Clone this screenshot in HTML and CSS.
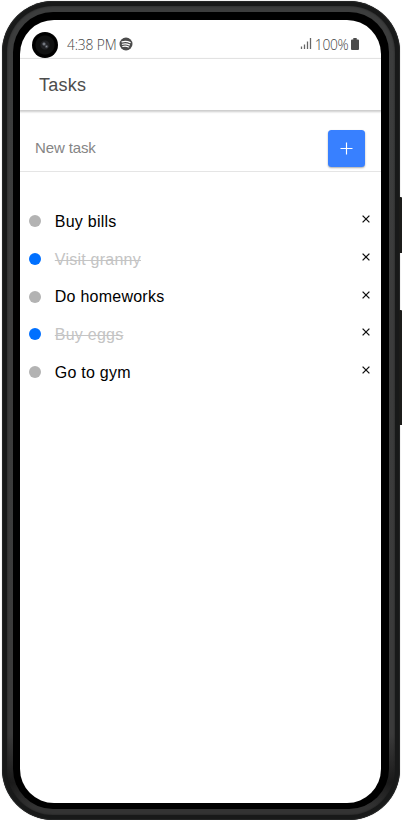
FILE: index.html
```html
<!DOCTYPE html>
<html lang="en">
<head>
<meta charset="utf-8">
<title>Tasks</title>
<link rel="stylesheet" href="styles.css">
</head>
<body>
<div class="phone">
  <i class="key key-power"></i>
  <i class="key key-volume"></i>
  <div class="rail">
    <div class="bezel">
      <main class="screen">
        <div class="status">
          <span class="camera"></span>
          <span class="clock">4:38 PM</span>
          <svg class="music" viewBox="0 0 14 14"><circle cx="7" cy="7" r="6.500" fill="#4b4b4b"/><path d="M3 4.900Q7.200 3.600 11.200 5.600M3.400 7.300Q7 6.200 10.400 7.900M3.800 9.500Q6.800 8.700 9.600 10" fill="none" stroke="#fff" stroke-width="1.200" stroke-linecap="round"/></svg>
          <svg class="signal" viewBox="0 0 12 13"><path d="M1.500 9.500V12M4.500 7.500V12M7.500 4.500V12M10.500 1V12" stroke="#666" stroke-width="1.300"/></svg>
          <span class="percent">100%</span>
          <svg class="battery" viewBox="0 0 8 12"><path d="M2.300 0h3.400v1.500H7q1 0 1 1V11q0 1-1 1H1q-1 0-1-1V2.500q0-1 1-1h1.300z" fill="#4b4b4b"/></svg>
        </div>
        <header class="bar"><h1>Tasks</h1></header>
        <form class="entry">
          <span class="placeholder">New task</span>
          <button class="add" type="button" aria-label="Add"><svg viewBox="0 0 13 13"><path d="M6.500 .5v12M.5 6.500h12" stroke="#fff" stroke-width="1.150"/></svg></button>
        </form>
        <ul class="tasks">
          <li><i class="dot"></i><span>Buy bills</span><svg class="remove" viewBox="0 0 8 8"><path d="M.6.6l6.800 6.800M7.400.6L.6 7.400"/></svg></li>
          <li class="done"><i class="dot"></i><span>Visit granny</span><svg class="remove" viewBox="0 0 8 8"><path d="M.6.6l6.800 6.800M7.400.6L.6 7.400"/></svg></li>
          <li><i class="dot"></i><span>Do homeworks</span><svg class="remove" viewBox="0 0 8 8"><path d="M.6.6l6.800 6.800M7.400.6L.6 7.400"/></svg></li>
          <li class="done"><i class="dot"></i><span>Buy eggs</span><svg class="remove" viewBox="0 0 8 8"><path d="M.6.6l6.800 6.800M7.400.6L.6 7.400"/></svg></li>
          <li><i class="dot"></i><span>Go to gym</span><svg class="remove" viewBox="0 0 8 8"><path d="M.6.6l6.800 6.800M7.400.6L.6 7.400"/></svg></li>
        </ul>
      </main>
    </div>
  </div>
</div>
</body>
</html>
```
FILE: styles.css
```css
* { box-sizing: border-box; }
body {
  margin: 0;
  background: #fff;
  overflow: hidden;
  font-family: "Liberation Sans", Arial, sans-serif;
}
.phone {
  position: relative;
  width: 398px;
  height: 819px;
  margin: 1px 0 0 2px;
  padding: 5px;
  border-radius: 51px;
  background: #181919;
  box-shadow: inset 0 0 0 1px #242525, 0 0 1px #777;
}
.key {
  position: absolute;
  left: 397px;
  width: 3px;
  background: #1c1c1a;
  border-radius: 1px 1px 0 0;
}
.key-power { top: 196px; height: 56px; }
.key-volume { top: 309px; height: 115px; }
.rail {
  height: 100%;
  padding: 6px;
  border-radius: 46px;
  background: linear-gradient(#3c3d3d, #3b3b3b 90%, #1a1a1a 96%, #333 99%);
  box-shadow: inset 0 0 2px #1c1c1c;
}
.bezel {
  height: 100%;
  padding: 8px 8px 6px 7px;
  border-radius: 40px;
  background: #000;
}
.screen {
  height: 100%;
  width: 361.400px;
  border-radius: 34px;
  background: #fff;
  overflow: hidden;
}
.status {
  display: flex;
  align-items: center;
  height: 39px;
  padding: 10px 22px 0 12px;
  border-bottom: 1px solid #ececec;
  color: #444;
  font: 300 13.800px "Open Sans", sans-serif;
}
.camera {
  width: 26px;
  height: 26px;
  margin-top: 1px;
  border-radius: 50%;
  background: radial-gradient(circle at 12px 12px, #9ca1aa 0, #555960 1.200px, transparent 2.200px), radial-gradient(circle at 14.500px 14.500px, #858992 0, #42454a 1.200px, transparent 2.200px), radial-gradient(circle, #202124 0 4px, #101111 5px 9px, #000 10px);
}
.clock { margin-left: 9px; letter-spacing: -.15px; }
.music { width: 14px; height: 14px; margin-left: 3px; }
.signal { width: 12px; height: 13px; margin: 0 3px 1px auto; }
.percent { letter-spacing: -.3px; }
.battery { width: 8px; height: 12px; margin: 0 0 1px 3px; }
.bar {
  display: flex;
  align-items: center;
  height: 51px;
  padding-left: 19px;
  box-shadow: 0 1px 2px 1px #ccc;
}
h1 {
  margin: 1px 0 0;
  color: #4d4d4d;
  font: 400 18px "Liberation Sans", sans-serif;
  letter-spacing: .25px;
}
.entry {
  display: flex;
  align-items: flex-start;
  justify-content: space-between;
  height: 62px;
  padding: 20px 16.400px 0 15px;
  border-bottom: 1px solid #e5e5e5;
}
.placeholder { margin-top: 9px; color: #858585; font-size: 15px; line-height: 17px; letter-spacing: -.12px; }
.add {
  display: flex;
  align-items: center;
  justify-content: center;
  width: 37px;
  height: 37px;
  margin-top: .3px;
  padding: 0;
  border: 0;
  border-radius: 3.500px;
  background: #3880ff;
  box-shadow: 0 1px 2px #0005;
}
.add svg { width: 13px; height: 13px; }
.tasks { list-style: none; margin: 30.300px 0 0; padding: 0 11.400px 0 9px; }
.tasks li {
  display: flex;
  align-items: center;
  height: 37.700px;
  font-size: 16px;
  line-height: 18px;
}
.dot { width: 12px; height: 12px; border-radius: 50%; background: #b3b3b3; }
.tasks span { margin: 1.600px 0 0 13.800px; letter-spacing: .24px; }
.remove { width: 8px; height: 8px; margin: 0 0 3.500px auto; fill: none; stroke: #111; stroke-width: 1.300; }
.done .dot { background: #0070ff; }
.done span { color: #c4c4c4; text-decoration: line-through; }
```
